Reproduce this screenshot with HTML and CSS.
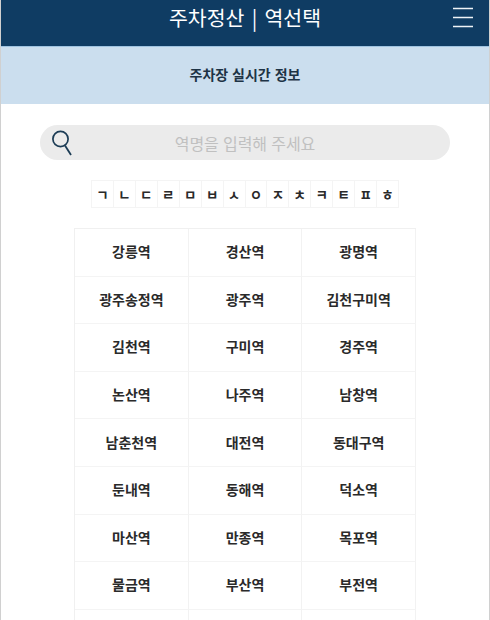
FILE: index.html
```html
<!DOCTYPE html>
<html lang="ko">
<head>
<meta charset="utf-8">
<title>주차정산 | 역선택</title>
<link rel="stylesheet" href="styles.css">
</head>
<body>
<div class="page">
  <header class="topbar">
    <h1 class="title">주차정산 | 역선택</h1>
    <svg class="menu" width="22" height="22" viewBox="0 0 22 22" aria-hidden="true">
      <path d="M1 2.5H21M1 11.5H21M1 20.5H21" stroke="#eef3f7" stroke-width="1.6" fill="none"/>
    </svg>
  </header>
  <div class="band">주차장 실시간 정보</div>
  <div class="search">
    <svg class="search-icon" width="22" height="28" viewBox="0 0 22 28" aria-hidden="true">
      <circle cx="9.5" cy="10" r="7.6" stroke="#1c3c55" stroke-width="1.7" fill="none"/>
      <path d="M14 16.5L20 26" stroke="#1c3c55" stroke-width="1.8" fill="none"/>
    </svg>
    <span class="placeholder">역명을 입력해 주세요</span>
  </div>
  <div class="letters">
    <span class="letter">ㄱ</span><span class="letter">ㄴ</span><span class="letter">ㄷ</span><span class="letter">ㄹ</span><span class="letter">ㅁ</span><span class="letter">ㅂ</span><span class="letter">ㅅ</span><span class="letter">ㅇ</span><span class="letter">ㅈ</span><span class="letter">ㅊ</span><span class="letter">ㅋ</span><span class="letter">ㅌ</span><span class="letter">ㅍ</span><span class="letter">ㅎ</span>
  </div>
  <div class="stations">
    <div class="station">강릉역</div><div class="station">경산역</div><div class="station">광명역</div>
    <div class="station">광주송정역</div><div class="station">광주역</div><div class="station">김천구미역</div>
    <div class="station">김천역</div><div class="station">구미역</div><div class="station">경주역</div>
    <div class="station">논산역</div><div class="station">나주역</div><div class="station">남창역</div>
    <div class="station">남춘천역</div><div class="station">대전역</div><div class="station">동대구역</div>
    <div class="station">둔내역</div><div class="station">동해역</div><div class="station">덕소역</div>
    <div class="station">마산역</div><div class="station">만종역</div><div class="station">목포역</div>
    <div class="station">물금역</div><div class="station">부산역</div><div class="station">부전역</div>
    <div class="station"></div><div class="station"></div><div class="station"></div>
  </div>
</div>
</body>
</html>
```
FILE: styles.css
```css
html, body {
  margin: 0;
  padding: 0;
  background: #fff;
}
.page {
  width: 490px;
  height: 620px;
  overflow: hidden;
  box-sizing: border-box;
  border-left: 1px solid #d0d0d0;
  border-right: 1px solid #d0d0d0;
  font-family: "Noto Sans CJK KR", "Noto Sans", sans-serif;
  background: #fff;
}
.topbar {
  height: 46px;
  margin: 0 -1px;
  background: #0f3c63;
  border-bottom: 1px solid #9fc3e0;
  display: flex;
  align-items: center;
  justify-content: center;
  position: relative;
}
.title {
  margin: 0 0 13px;
  font-size: 20.5px;
  font-weight: 400;
  line-height: 30px;
  color: #fff;
  word-spacing: 1.5px;
}
.menu {
  position: absolute;
  right: 16px;
  top: 6px;
}
.band {
  height: 57px;
  padding-bottom: 3px;
  box-sizing: border-box;
  background: #cbdeee;
  display: flex;
  align-items: center;
  justify-content: center;
  font-size: 14px;
  font-weight: 700;
  color: #1d3345;
}
.search {
  margin: 21px 39px 0;
  height: 35px;
  border-radius: 18px;
  background: #ebebeb;
  display: flex;
  align-items: center;
  justify-content: center;
  position: relative;
}
.search-icon {
  position: absolute;
  left: 11px;
  top: 4px;
}
.placeholder {
  font-size: 16px;
  color: #c0c0c0;
  letter-spacing: -0.1px;
}
.letters {
  margin: 20px auto 0;
  width: 308px;
  box-sizing: border-box;
  height: 28px;
  display: grid;
  grid-template-columns: repeat(14, 1fr);
  border: 1px solid #f4f4f4;
  border-right: 0;
}
.letter {
  display: flex;
  align-items: center;
  justify-content: center;
  border-right: 1px solid #f4f4f4;
  font-size: 13.5px;
  font-weight: 700;
  color: #2a2a2a;
}
.stations {
  margin: 20px 0 0 73px;
  width: 342px;
  box-sizing: border-box;
  display: grid;
  grid-template-columns: repeat(3, 1fr);
  grid-auto-rows: 47.6px;
  border-top: 1px solid #f0f0f0;
  border-left: 1px solid #f0f0f0;
}
.station {
  display: flex;
  align-items: center;
  justify-content: center;
  padding-bottom: 2px;
  box-sizing: border-box;
  border-right: 1px solid #f2f2f2;
  border-bottom: 1px solid #f4f4f4;
  font-size: 14px;
  font-weight: 700;
  color: #2a2a2a;
}
```
